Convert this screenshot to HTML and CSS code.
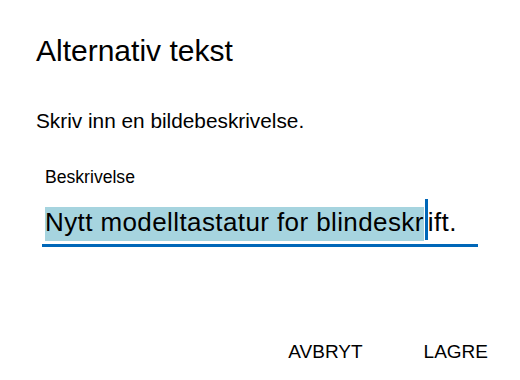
FILE: index.html
```html
<!DOCTYPE html>
<html lang="nb">
<head>
<meta charset="utf-8">
<title>Alternativ tekst</title>
<link rel="stylesheet" href="styles.css">
</head>
<body>
<div class="dialog">
  <h1 class="title">Alternativ tekst</h1>
  <p class="subtitle">Skriv inn en bildebeskrivelse.</p>
  <div class="label">Beskrivelse</div>
  <div class="field">
    <span class="sel">Nytt modelltastatur for blindeskr</span><span class="caret"></span>ift.
  </div>
  <div class="actions">
    <span class="btn">AVBRYT</span>
    <span class="btn">LAGRE</span>
  </div>
</div>
</body>
</html>
```
FILE: styles.css
```css
html, body {
  margin: 0;
  padding: 0;
  background: #ffffff;
}
body {
  width: 520px;
  height: 380px;
  overflow: hidden;
  font-family: "Liberation Sans", Arial, sans-serif;
  color: #000000;
}
.dialog {
  padding: 33px 0 0 36px;
}
.title {
  margin: 0;
  font-size: 30px;
  font-weight: normal;
  line-height: 36px;
}
.subtitle {
  margin: 40px 0 0 0;
  font-size: 20.8px;
  line-height: 24px;
}
.label {
  margin: 34px 0 0 9px;
  font-size: 17.6px;
  line-height: 20px;
}
.field {
  margin: 19px 0 0 6px;
  width: 433px;
  padding: 0 0 5px 3px;
  font-size: 26px;
  letter-spacing: 0.4px;
  line-height: 33px;
  white-space: nowrap;
  border-bottom: 3px solid #0067b8;
}
.sel {
  background: #a6d4df;
  padding: 0 0 4px 0;
}
.caret {
  position: relative;
  display: inline-block;
  width: 4px;
  height: 0;
}
.caret::after {
  content: "";
  position: absolute;
  left: 1px;
  bottom: -9px;
  width: 3px;
  height: 41px;
  background: #0067b8;
}
.actions {
  display: flex;
  justify-content: flex-end;
  gap: 61px;
  margin-top: 94px;
  padding-right: 32px;
  font-size: 19px;
  line-height: 22px;
}
```
